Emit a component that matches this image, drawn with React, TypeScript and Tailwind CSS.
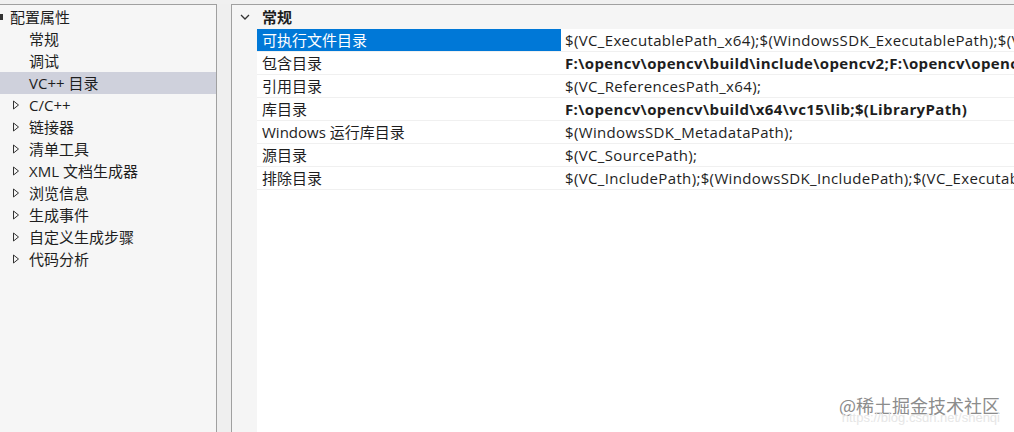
import React from 'react';

const FONT = '"Open Sans", "Noto Sans CJK SC", sans-serif';

type TreeItem = { label: string; level: 0 | 1; expandable?: boolean; selected?: boolean };

const TREE: TreeItem[] = [
  { label: '配置属性', level: 0 },
  { label: '常规', level: 1 },
  { label: '调试', level: 1 },
  { label: 'VC++ 目录', level: 1, selected: true },
  { label: 'C/C++', level: 1, expandable: true },
  { label: '链接器', level: 1, expandable: true },
  { label: '清单工具', level: 1, expandable: true },
  { label: 'XML 文档生成器', level: 1, expandable: true },
  { label: '浏览信息', level: 1, expandable: true },
  { label: '生成事件', level: 1, expandable: true },
  { label: '自定义生成步骤', level: 1, expandable: true },
  { label: '代码分析', level: 1, expandable: true },
];

type Prop = { name: string; value: string; bold?: boolean; selected?: boolean };

const PROPS: Prop[] = [
  { name: '可执行文件目录', value: '$(VC_ExecutablePath_x64);$(WindowsSDK_ExecutablePath);$(VS_ExecutablePath);$(MSBuild_ExecutablePath)', selected: true },
  { name: '包含目录', value: 'F:\\opencv\\opencv\\build\\include\\opencv2;F:\\opencv\\opencv\\build\\include;$(IncludePath)', bold: true },
  { name: '引用目录', value: '$(VC_ReferencesPath_x64);' },
  { name: '库目录', value: 'F:\\opencv\\opencv\\build\\x64\\vc15\\lib;$(LibraryPath)', bold: true },
  { name: 'Windows 运行库目录', value: '$(WindowsSDK_MetadataPath);' },
  { name: '源目录', value: '$(VC_SourcePath);' },
  { name: '排除目录', value: '$(VC_IncludePath);$(WindowsSDK_IncludePath);$(VC_ExecutablePath_x64);' },
];

const Collapsed = () => (
  <svg width="8" height="10" viewBox="0 0 8 10" className="shrink-0">
    <polygon points="1.5,1 6.5,5 1.5,9" fill="none" stroke="#333" strokeWidth="1" />
  </svg>
);

const App: React.FC = () => {
  return (
    <div
      className="relative w-[1014px] h-[432px] overflow-hidden bg-[#f0f0f0] flex pt-[4px] text-[15px] text-[#1e1e1e]"
      style={{ fontFamily: FONT }}
    >
      {/* left tree */}
      <div className="w-[217px] shrink-0 bg-[#f6f6f6] border-t border-r border-[#a0a0a0] pt-[1px]">
        {TREE.map((item) => (
          <div
            key={item.label}
            className={`h-[22px] flex items-center whitespace-nowrap ${item.selected ? 'bg-[#cfd1dc]' : ''}`}
          >
            {item.level === 0 ? (
              <>
                <div className="w-[3px] h-[6px] bg-[#333] mr-[7px]" />
                <span>{item.label}</span>
              </>
            ) : (
              <>
                <div className="w-[29px] pl-[12px] flex items-center">
                  {item.expandable && <Collapsed />}
                </div>
                <span>{item.label}</span>
              </>
            )}
          </div>
        ))}
      </div>

      {/* gap */}
      <div className="w-[14px] shrink-0 bg-[#efefef]" />

      {/* property grid */}
      <div className="flex-1 min-w-0 bg-white border-t border-l border-[#a0a0a0] flex flex-col">
        <div className="h-[24px] shrink-0 bg-[#f5f5f5] flex items-center">
          <div className="w-[30px] flex items-center pl-[8px]">
            <svg width="10" height="8" viewBox="0 0 10 8">
              <polyline points="1,2 5,6 9,2" fill="none" stroke="#333" strokeWidth="1.3" />
            </svg>
          </div>
          <span className="font-bold">常规</span>
        </div>
        <div className="flex flex-1">
          <div className="w-[25px] shrink-0 bg-[#f5f5f5]" />
          <div className="flex-1 min-w-0">
            {PROPS.map((p) => (
              <div key={p.name} className="h-[23px] flex border-b border-[#f0f0f0] whitespace-nowrap">
                <div
                  className={`w-[304px] shrink-0 pl-[5px] flex items-center ${p.selected ? 'bg-[#0078d7] text-white' : ''}`}
                >
                  {p.name}
                </div>
                <div
                  className={`flex-1 min-w-0 pl-[4px] flex items-center overflow-hidden tracking-[0.35px] ${p.bold ? 'font-bold' : ''}`}
                >
                  {p.value}
                </div>
              </div>
            ))}
          </div>
        </div>
      </div>

      {/* watermark */}
      <div className="absolute right-[14px] bottom-[8px] flex flex-col items-end leading-none">
        <span className="text-[18px] text-[#8c8c8c]" style={{ fontFamily: '"Noto Sans CJK SC", sans-serif' }}>
          @稀土掘金技术社区
        </span>
        <span className="text-[13px] text-[#e6e6e6] -mt-[3px]" style={{ fontFamily: '"Liberation Sans", sans-serif' }}>
          https://blog.csdn.net/shenqi
        </span>
      </div>
    </div>
  );
};

export default App;
